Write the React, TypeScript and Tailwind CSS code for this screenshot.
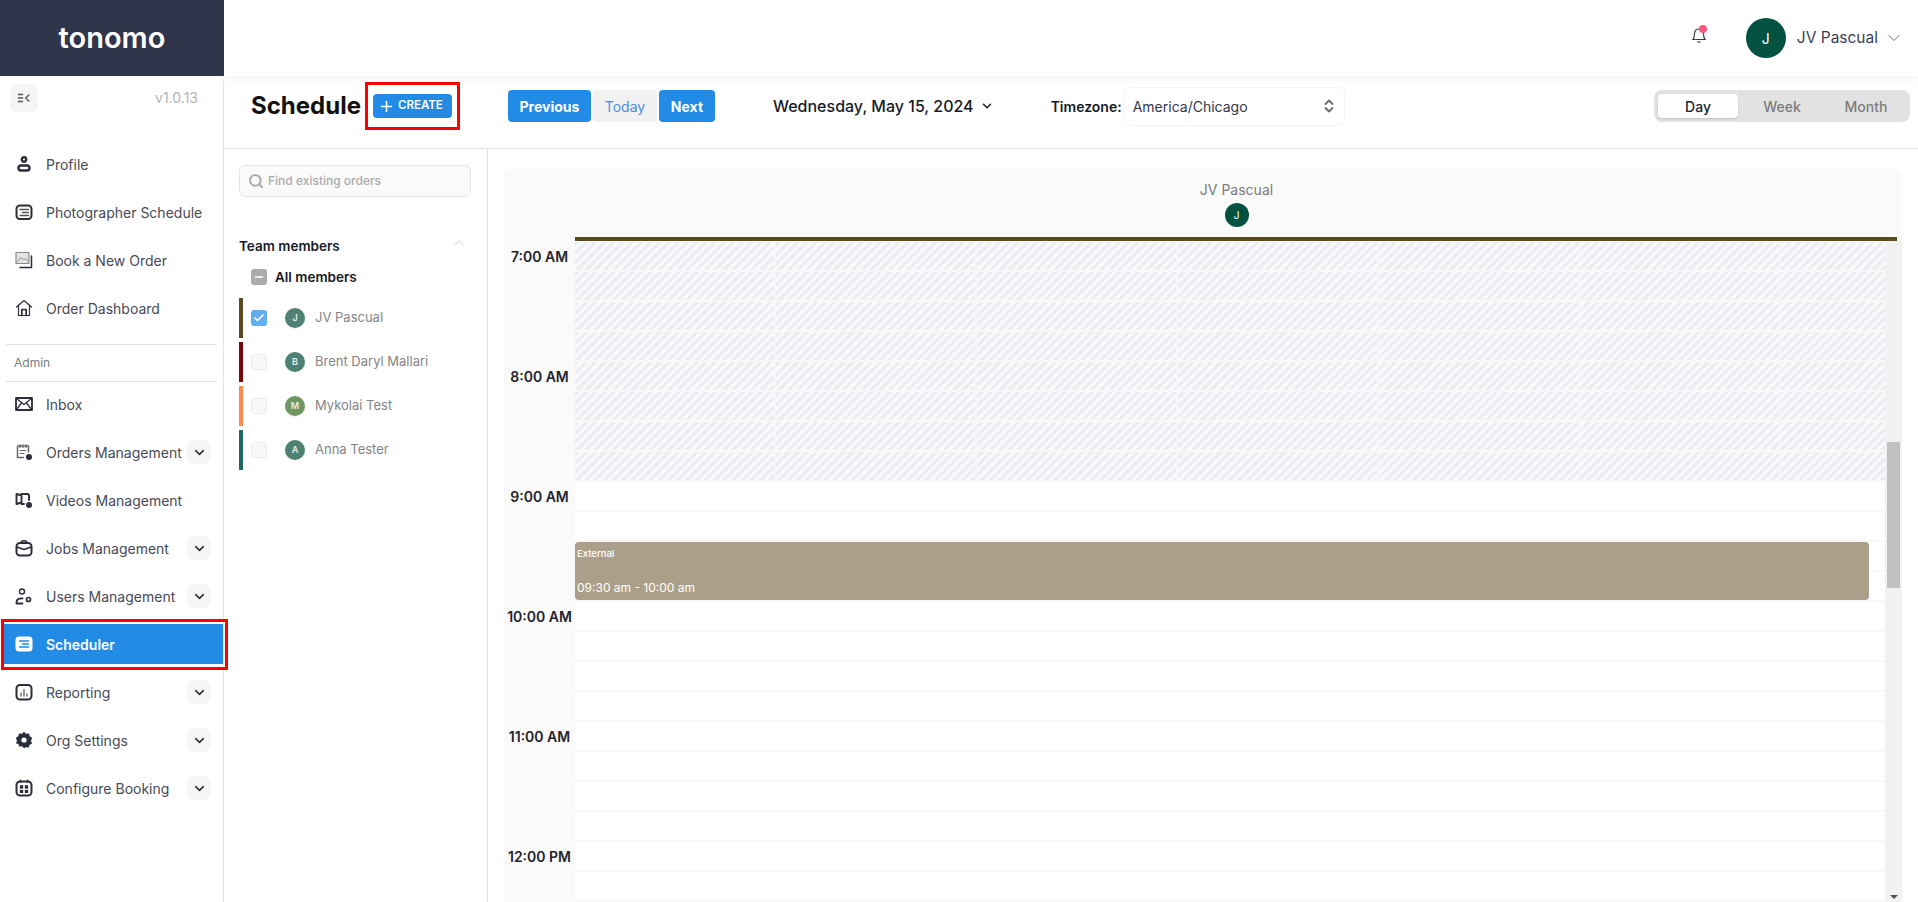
import { Check, ChevronDown, ChevronUp, Minus, Plus, Search } from "lucide-react";
import type { ReactNode } from "react";

const FONT = "[font-family:Inter,'Liberation_Sans',sans-serif]";

function NavSvg({ children }: { children: ReactNode }) {
  return (
    <svg viewBox="0 0 18 18" className="h-[18px] w-[18px] shrink-0" fill="none" stroke="currentColor" strokeWidth="1.6" strokeLinecap="round" strokeLinejoin="round">
      {children}
    </svg>
  );
}

const icons: Record<string, ReactNode> = {
  profile: (
    <NavSvg>
      <circle cx="9" cy="4.5" r="2.2" strokeWidth="2.4" />
      <rect x="3.5" y="10.5" width="11" height="5" rx="2.5" strokeWidth="2.4" />
    </NavSvg>
  ),
  schedule: (
    <NavSvg>
      <rect x="1.5" y="2.5" width="15" height="13.5" rx="3.5" strokeWidth="2" />
      <path d="M5 6.5h8.5M7.500 9.500h6M5 12.500h8.500" stroke="#555" strokeWidth="1.300" />
    </NavSvg>
  ),
  book: (
    <NavSvg>
      <rect x="1" y="1.500" width="13" height="11" fill="#e4e4e4" stroke="#8a8a8a" strokeWidth="1.200" />
      <path d="M2.500 10.500l3.500-4 2.500 2.500 2-1.500 2.500 3" stroke="#8a8a8a" strokeWidth="1" />
      <path d="M16.500 5v11.500H5" strokeWidth="1.500" />
    </NavSvg>
  ),
  home: (
    <NavSvg>
      <path d="M1.500 8L9 1.500 16.500 8M3.500 7v9.500h11V7" strokeWidth="1.200" />
      <path d="M6.800 16.500v-6h4.400v6" strokeWidth="1.700" />
    </NavSvg>
  ),
  inbox: (
    <NavSvg>
      <rect x="1" y="3" width="16" height="12" strokeWidth="1.800" />
      <path d="M1.500 3.500L9 9.500l7.500-6M1.500 14.500L6.500 8M16.500 14.500L11.500 8" strokeWidth="1.300" />
    </NavSvg>
  ),
  orders: (
    <NavSvg>
      <path d="M8.500 14.500H2.500V3h11v6" stroke="#666" strokeWidth="1.500" />
      <path d="M5 1.500v3M8 1.500v3M11 1.500v3M5 7.500h6M5 10.500h4" stroke="#666" strokeWidth="1.200" />
      <circle cx="14" cy="14" r="3" fill="currentColor" stroke="none" />
    </NavSvg>
  ),
  videos: (
    <NavSvg>
      <path d="M6.500 4.500L1.500 3v10l5-1.500z" strokeWidth="1.900" />
      <path d="M6.500 3h6a1.500 1.500 0 0 1 1.500 1.500V9M6.500 13h2.500" strokeWidth="1.900" />
      <circle cx="14" cy="14" r="3" fill="currentColor" stroke="none" />
    </NavSvg>
  ),
  jobs: (
    <NavSvg>
      <rect x="1.500" y="4" width="15" height="12.500" rx="3.500" strokeWidth="2" />
      <path d="M6 4c0-3 6-3 6 0M2 8l7 2.500L16 8" strokeWidth="1.600" />
    </NavSvg>
  ),
  users: (
    <NavSvg>
      <circle cx="7" cy="4.500" r="2.500" strokeWidth="1.400" />
      <path d="M1.500 16.500v-1.500c0-2.500 2.500-4 6-3.500M1.500 16.500h6" strokeWidth="1.800" />
      <circle cx="13.500" cy="12.500" r="2" strokeWidth="1.700" />
    </NavSvg>
  ),
  scheduler: (
    <svg viewBox="0 0 18 18" className="h-[18px] w-[18px] shrink-0">
      <rect x="0.500" y="1.500" width="17" height="15" rx="3.500" fill="#fff" />
      <path d="M4.500 6h9M7.500 9h6M4.500 12h9" stroke="#228be6" strokeWidth="1.400" strokeLinecap="round" />
    </svg>
  ),
  reporting: (
    <NavSvg>
      <rect x="1.500" y="2" width="15" height="14.500" rx="3.500" strokeWidth="2" />
      <path d="M6 13v-3M9 13V6.500M12 13v-2" stroke="#777" strokeWidth="1.500" />
    </NavSvg>
  ),
  org: (
    <svg viewBox="0 0 18 18" className="h-[18px] w-[18px] shrink-0">
      <path d="M9 .800l2 2 3-.300.800 2.800 2.400 1.800L16 9.800l1 2.600-2.400 1.500-.800 2.700-2.800-.300L9 17.200l-2-1.900-2.800.300-.800-2.700L1 12.400l1-2.600-1.200-2.900 2.400-1.600.800-2.800 3 .300z" fill="currentColor" />
      <circle cx="9" cy="9" r="2.600" fill="#fff" />
    </svg>
  ),
  booking: (
    <NavSvg>
      <rect x="1.500" y="2.500" width="15" height="14" rx="3.500" strokeWidth="2" />
      <path d="M5.500 1.200v2M12.500 1.200v2" strokeWidth="1.400" />
      <rect x="4.800" y="6.200" width="3.400" height="3.400" fill="currentColor" stroke="none" />
      <rect x="9.800" y="6.200" width="3.400" height="3.400" fill="currentColor" stroke="none" />
      <rect x="4.800" y="10.800" width="3.400" height="3.200" fill="currentColor" stroke="none" />
      <rect x="9.800" y="10.800" width="3.400" height="3.200" fill="currentColor" stroke="none" />
    </NavSvg>
  ),
};

function NavRow({ icon, label, more }: { icon: string; label: string; more?: boolean }) {
  return (
    <div className="flex h-12 items-center pl-[15px] pr-[12px] text-[14px] text-[#474a56]">
      <span className="text-[#2b2e3a]">{icons[icon]}</span>
      <span className="ml-[13px] flex-1 whitespace-nowrap">{label}</span>
      {more && (
        <span className="flex h-6 w-6 items-center justify-center rounded-lg bg-[#f6f6f6] text-[#2b2e3a]">
          <ChevronDown size={15} strokeWidth={2.5} />
        </span>
      )}
    </div>
  );
}

function Sidebar() {
  return (
    <aside className="flex w-[224px] shrink-0 flex-col">
      <div className="flex h-[76px] items-center justify-center bg-[#2f354a] pb-[2px]">
        <span className="text-[29px] font-semibold leading-none text-white">tonomo</span>
      </div>
      <div className="flex flex-1 flex-col rounded-tr-lg border-r border-[#e3e3e3] bg-white">
        <div className="flex items-center justify-between pl-[10px] pr-[25px] pt-2">
          <span className="flex h-7 w-7 items-center justify-center rounded-md bg-[#f5f5f5]">
            <svg viewBox="0 0 16 12" className="h-3 w-[14px]" fill="none" stroke="#555" strokeWidth="1.500">
              <path d="M1 2h6M1 6h6M1 10h6M14 2l-4 4 4 4" />
            </svg>
          </span>
          <span className="-mt-[2px] text-[14px] text-[#b4b4b4]">v1.0.13</span>
        </div>
        <div className="mt-[28px]">
          <NavRow icon="profile" label="Profile" />
          <NavRow icon="schedule" label="Photographer Schedule" />
          <NavRow icon="book" label="Book a New Order" />
          <NavRow icon="home" label="Order Dashboard" />
        </div>
        <div className="mx-[6px] mt-[12px] flex h-[38px] items-center border-y border-[#e2e2e2] pl-2 text-[12px] text-[#7b7b7b]">Admin</div>
        <div className="-mt-[2px]">
          <NavRow icon="inbox" label="Inbox" />
          <NavRow icon="orders" label="Orders Management" more />
          <NavRow icon="videos" label="Videos Management" />
          <NavRow icon="jobs" label="Jobs Management" more />
          <NavRow icon="users" label="Users Management" more />
          <div className="relative my-1 ml-[3px] flex h-10 items-center bg-[#228be6] pl-3 text-[14px] font-semibold text-white">
            {icons.scheduler}
            <span className="ml-[13px]">Scheduler</span>
            <span className="absolute -bottom-[6px] -left-[2px] -right-[5px] -top-[5px] border-[3px] border-[#fe0000]" />
          </div>
          <NavRow icon="reporting" label="Reporting" more />
          <NavRow icon="org" label="Org Settings" more />
          <NavRow icon="booking" label="Configure Booking" more />
        </div>
      </div>
    </aside>
  );
}

function TopBar() {
  return (
    <header className="relative z-10 flex h-[76px] items-center justify-end bg-white pr-[14px] shadow-[0_2px_8px_rgba(0,0,0,0.06)]">
      <span className="relative -mt-[6px] mr-[39px] text-[#3a3d49]">
        <svg viewBox="0 0 16 18" className="h-[18px] w-4" fill="none" stroke="currentColor" strokeWidth="1.200">
          <path d="M2 13.500c1.500-1.500 1.300-3.500 1.500-6C3.700 4.500 5.500 3 8 3s4.300 1.500 4.500 4.500c.2 2.500 0 4.500 1.500 6zM6.500 15.500c.5 1 2.500 1 3 0" />
        </svg>
        <span className="absolute right-0 top-[-1px] h-2 w-2 rounded-full bg-[#fb5779]" />
      </span>
      <span className="flex h-10 w-10 items-center justify-center rounded-full bg-[#035141] text-[14px] text-white">J</span>
      <span className="ml-[11px] text-[15.500px] text-[#3b4054]">JV Pascual</span>
      <ChevronDown size={20} strokeWidth={1} className="ml-[6px] text-[#555]" />
    </header>
  );
}

function Toolbar() {
  return (
    <div className="flex h-[73px] shrink-0 items-center border-b border-[#e2e2e2] bg-white pb-[12px]">
      <h1 className="ml-[27px] text-[24px] font-bold text-[#111]">Schedule</h1>
      <div className="ml-[4px] flex h-[48px] w-[95px] items-center justify-center border-[3px] border-[#fe0000]">
        <button className="flex h-6 w-[79px] items-center justify-start gap-[3px] rounded-[4px] bg-[#228be6] pl-[5px] text-[11.500px] font-semibold text-white">
          <Plus size={17} strokeWidth={2.2} />
          CREATE
        </button>
      </div>
      <div className="ml-[48px] flex items-center gap-[2px] text-[14px]">
        <button className="h-8 w-[83px] rounded-[4px] bg-[#228be6] font-bold text-white">Previous</button>
        <button className="h-8 w-[64px] rounded-[4px] bg-[#f1f1f1] text-[#4f8ddf]">Today</button>
        <button className="h-8 w-[56px] rounded-[4px] bg-[#228be6] font-bold text-white">Next</button>
      </div>
      <div className="ml-[58px] flex items-center gap-[6px] text-[16px] font-medium text-[#171a26]">
        Wednesday, May 15, 2024
        <ChevronDown size={14} strokeWidth={2.5} />
      </div>
      <span className="ml-[57px] text-[14px] font-semibold text-[#171a26]">Timezone:</span>
      <div className="ml-[2px] flex h-[39px] w-[221px] items-center justify-between rounded-md border border-[#f3f3f3] pl-2 pr-[9px] text-[14px] text-[#33364a]">
        America/Chicago
        <svg viewBox="0 0 12 16" className="h-4 w-3" fill="none" stroke="#6b6b6b" strokeWidth="1.800" strokeLinecap="round" strokeLinejoin="round">
          <path d="M2.500 6L6 2.500 9.500 6M2.500 10L6 13.500 9.500 10" />
        </svg>
      </div>
      <div className="ml-auto mr-[8px] flex h-8 w-[256px] items-center rounded-lg bg-[#e2e2e2] p-1 text-[14px] font-medium text-[#7c7c7c]">
        <span className="flex h-6 w-20 items-center justify-center rounded-[4px] bg-white text-[#22242e] shadow-[0_1px_2px_rgba(0,0,0,0.15)]">Day</span>
        <span className="flex h-6 w-[88px] items-center justify-center">Week</span>
        <span className="flex h-6 flex-1 items-center justify-center">Month</span>
      </div>
    </div>
  );
}

const members = [
  { name: "JV Pascual", initial: "J", bar: "bg-[#5c4a1f]", avatar: "bg-[#4e8073]", checked: true },
  { name: "Brent Daryl Mallari", initial: "B", bar: "bg-[#7b0607]", avatar: "bg-[#4e8073]", checked: false },
  { name: "Mykolai Test", initial: "M", bar: "bg-[#fd8a4b]", avatar: "bg-[#6f9764]", checked: false },
  { name: "Anna Tester", initial: "A", bar: "bg-[#1f6a60]", avatar: "bg-[#4e8073]", checked: false },
];

function MemberPanel() {
  return (
    <div className="w-[264px] shrink-0 border-r border-[#e2e2e2] pl-[15px] pr-[16px] pt-4">
      <div className="flex h-8 items-center gap-1 rounded-md border border-[#e4e4e4] bg-[#fafafa] px-2 text-[12px] font-medium text-[#ababab]">
        <Search size={16} strokeWidth={3} />
        Find existing orders
      </div>
      <div className="mt-[39px] flex items-center justify-between pr-1 text-[13.500px] font-semibold text-[#171a26]">
        Team members
        <ChevronUp size={16} className="mt-[-6px] text-[#e6e6e6]" />
      </div>
      <div className="mt-[11px] flex items-center pl-3 text-[13.500px] font-semibold text-[#171a26]">
        <span className="flex h-4 w-4 items-center justify-center rounded-[3px] bg-[#acacac] text-white">
          <Minus size={12} strokeWidth={3} />
        </span>
        <span className="ml-[8px]">All members</span>
      </div>
      <div className="mt-[10px] flex flex-col gap-1">
        {members.map((m) => (
          <div key={m.name} className="flex h-10 items-center">
            <span className={`h-10 w-1 ${m.bar}`} />
            <span className={`ml-2 flex h-4 w-4 items-center justify-center rounded-[3px] ${m.checked ? "bg-[#63aef0] text-white" : "border border-[#ececec] bg-[#f8f8f8]"}`}>
              {m.checked && <Check size={12} strokeWidth={3.5} />}
            </span>
            <span className={`ml-[18px] flex h-5 w-5 items-center justify-center rounded-full text-[9px] font-semibold text-[#e6efec] shadow-[0_1px_2px_rgba(0,0,0,0.08)] ${m.avatar}`}>{m.initial}</span>
            <span className="ml-[10px] text-[13px] text-[#858585]">{m.name}</span>
          </div>
        ))}
      </div>
    </div>
  );
}

const hours = ["7:00 AM", "8:00 AM", "9:00 AM", "10:00 AM", "11:00 AM", "12:00 PM"];
const hatched = Array.from({ length: 8 });
const plain = Array.from({ length: 15 });

function Calendar() {
  return (
    <div className="min-w-0 flex-1 overflow-hidden pl-4 pr-[16px] pt-[20px]">
      <div className="h-full rounded-t-md bg-[#fafafa]">
        <div className="flex h-[68px] flex-col items-center pl-[71px] pr-[4px] pt-[11px] text-[14px] leading-5 text-[#7b7b7b]">
          <span>JV Pascual</span>
          <span className="mt-[3px] flex h-6 w-6 items-center justify-center rounded-full bg-[#035141] text-[10px] text-white">J</span>
        </div>
        <div className="flex">
          <div className="w-[71px] shrink-0 pt-[10px]">
            {hours.map((h) => (
              <div key={h} className="h-[120px] text-center text-[14px] font-semibold leading-5 text-[#22242c]">{h}</div>
            ))}
          </div>
          <div className="relative min-w-0 flex-1">
            <div className="mr-[5px] h-1 bg-[#5c4a1f]" />
            <div className="flex h-[661px] overflow-hidden">
              <div className="min-w-0 flex-1 bg-white pt-[1px]">
                {hatched.map((_, i) => (
                  <div
                    key={i}
                    className="h-[30px] border-b-2 border-[#f8f8f8] bg-[repeating-linear-gradient(90deg,transparent_0px,transparent_199px,#f5f6f8_199px,#f5f6f8_201px),repeating-linear-gradient(135deg,#ebedf0_0px,#ebedf0_3.250px,#f8f9fa_3.250px,#f8f9fa_6.500px)]"
                  />
                ))}
                {plain.map((_, i) => (
                  <div key={i} className="h-[30px] border-b-2 border-[#f8f8f8]" />
                ))}
              </div>
              <div className="flex w-[17px] shrink-0 flex-col items-center bg-[#f1f1f1]">
                <div className="mt-[201px] h-[146px] w-[13px] bg-[#c1c1c1]" />
                <div className="mb-[3px] mt-auto h-0 w-0 border-x-[4px] border-t-[4px] border-x-transparent border-t-[#505050]" />
              </div>
            </div>
            <div className="absolute left-0 top-[305px] flex h-[58px] w-[1294px] flex-col justify-between rounded-[4px] bg-[#ac9f8a] pb-[4px] pl-[2px] pt-[6px] text-white">
              <span className="text-[9.500px] font-medium leading-3">External</span>
              <span className="text-[12px] leading-4">09:30 am - 10:00 am</span>
            </div>
          </div>
        </div>
      </div>
    </div>
  );
}

export default function App() {
  return (
    <div className={`flex h-[902px] w-[1918px] overflow-hidden bg-white ${FONT}`}>
      <Sidebar />
      <main className="flex min-w-0 flex-1 flex-col">
        <TopBar />
        <Toolbar />
        <div className="flex min-h-0 flex-1">
          <MemberPanel />
          <Calendar />
        </div>
      </main>
    </div>
  );
}
